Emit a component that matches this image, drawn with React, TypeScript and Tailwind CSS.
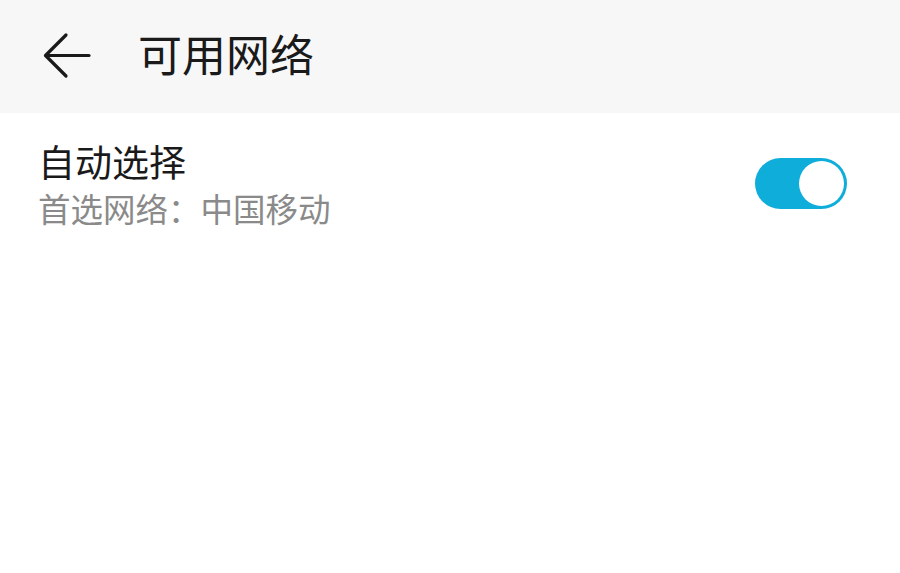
import { useState } from "react";

const font = {
  fontFamily: '"Noto Sans CJK SC", "Noto Sans", sans-serif',
};

export default function App() {
  const [auto, setAuto] = useState(true);

  return (
    <div className="w-[900px] h-[573px] bg-white overflow-hidden" style={font}>
      {/* Header */}
      <div className="h-[113px] bg-[#f7f7f7] flex items-center pl-[42px] pb-[4px]">
        <svg
          width="50"
          height="48"
          viewBox="0 0 50 48"
          fill="none"
          stroke="#1a1a1a"
          strokeWidth="3.2"
          strokeLinecap="round"
          strokeLinejoin="round"
          className="mt-[2px]"
        >
          <path d="M47 23.5H4" />
          <path d="M24 3L3.5 23.5L24 44" />
        </svg>
        <h1 className="ml-[46px] text-[44px] leading-none font-normal text-[#1a1a1a] -mt-[4px]">
          可用网络
        </h1>
      </div>

      {/* Auto select row */}
      <div className="flex items-start justify-between pl-[38px] pr-[53px] pt-[24px]">
        <div className="flex flex-col">
          <span className="text-[37px] leading-[48px] text-[#1a1a1a]">
            自动选择
          </span>
          <span className="text-[32.5px] leading-[46px] text-[#8a8a8a]">
            首选网络：中国移动
          </span>
        </div>
        <button
          onClick={() => setAuto(!auto)}
          className={`mt-[21px] w-[92px] h-[51px] rounded-full flex items-center p-[3px] ${
            auto ? "bg-[#0fadda] justify-end" : "bg-[#cccccc] justify-start"
          }`}
        >
          <span className="w-[45px] h-[45px] rounded-full bg-white block" />
        </button>
      </div>
    </div>
  );
}
